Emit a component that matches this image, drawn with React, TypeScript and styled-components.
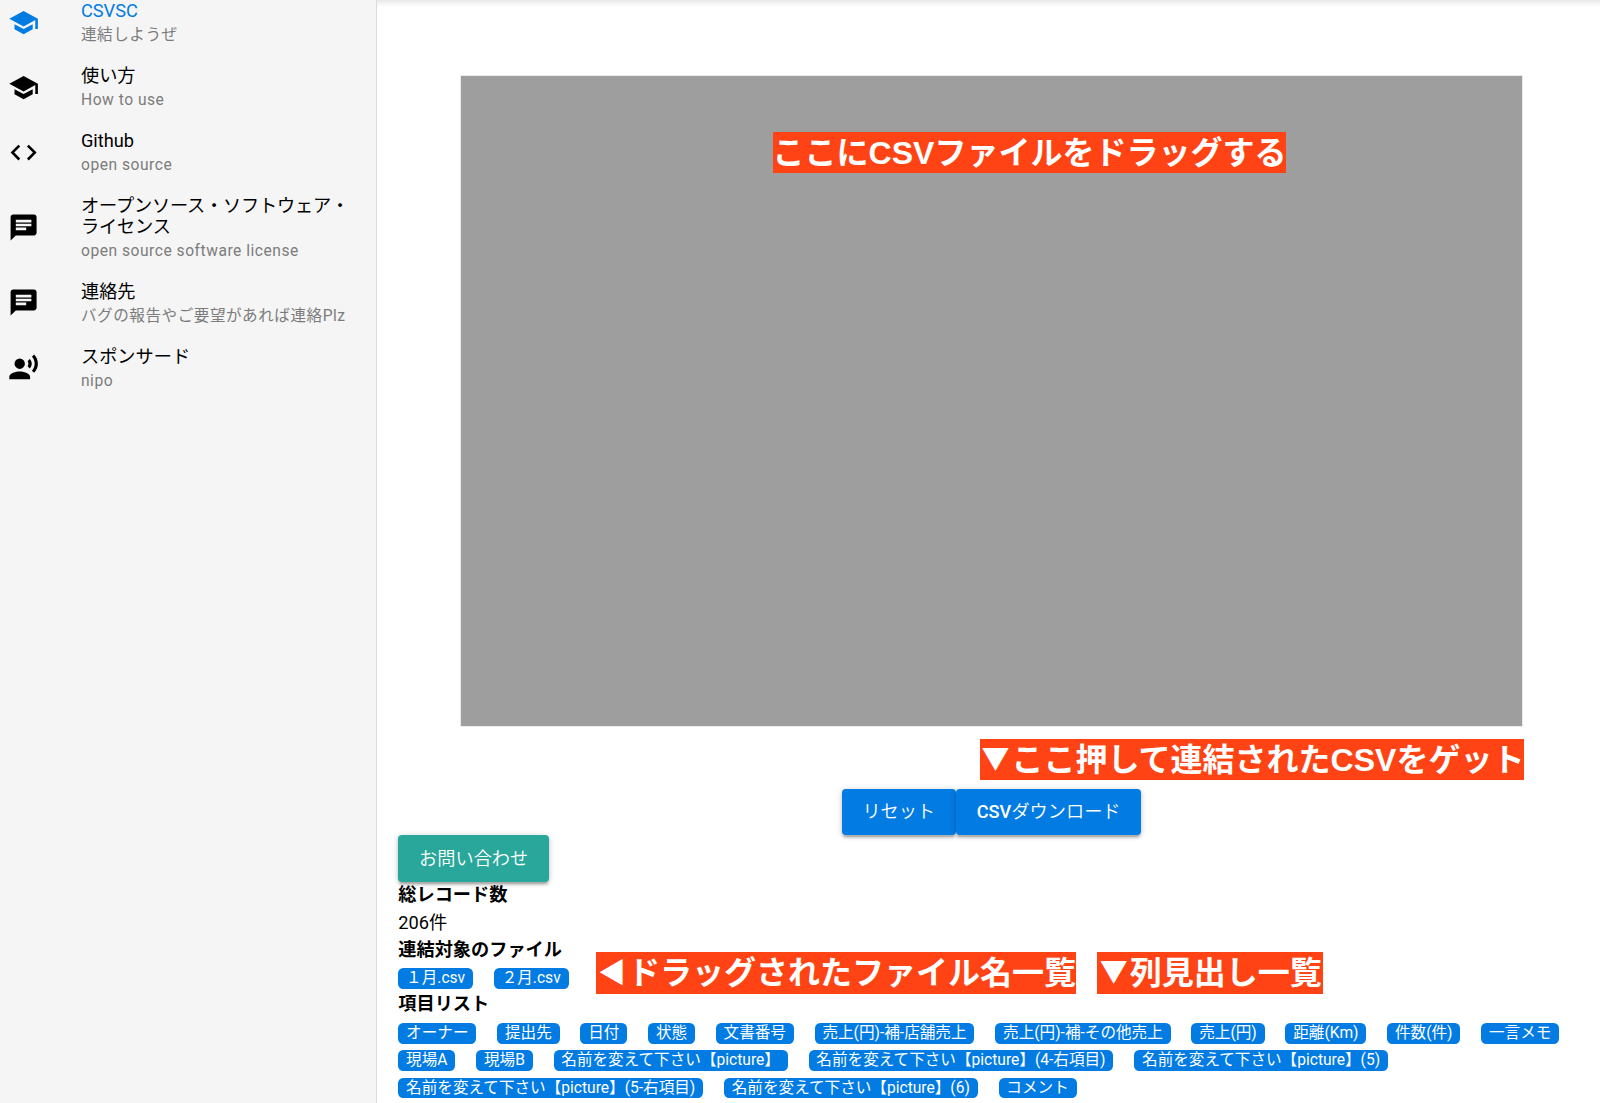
import React from "react";
import styled, { createGlobalStyle, css } from "styled-components";

const GlobalStyle = createGlobalStyle`
  *, *::before, *::after { box-sizing: border-box; }
  html, body { margin: 0; padding: 0; overflow: hidden; background: #fff; }
  body {
    font-family: Roboto, "Noto Sans CJK JP", sans-serif;
    font-size: 18.2px;
    line-height: 27.3px;
    color: #000;
    text-spacing-trim: space-all;
    -webkit-font-smoothing: antialiased;
  }
`;

const Layout = styled.div`
  position: relative;
  display: flex;
  width: 1600px;
  height: 1103px;
  overflow: hidden;
`;

const Drawer = styled.nav`
  flex: none;
  width: 377px;
  background: #f5f5f5;
  border-right: 1px solid #dcdcdc;
`;

const DrawerList = styled.div`
  display: flex;
  flex-direction: column;
  margin-top: -10.1px;
`;

const DrawerItem = styled.a<{ $active?: boolean }>`
  display: flex;
  align-items: center;
  padding: 10.4px 20.8px 10.3px 8.2px;
  color: ${(p) => (p.$active ? "#027be3" : "#000")};
`;

const IconSlot = styled.div`
  flex: none;
  display: flex;
  width: 72.8px;
`;

const Icon = styled.svg`
  width: 31.2px;
  height: 31.2px;
  fill: currentColor;
`;

const ItemText = styled.div`
  flex: 1;
  min-width: 0;
`;

const ItemLabel = styled.div<{ $tight?: boolean }>`
  line-height: 21px;
  white-space: pre-line;
  letter-spacing: ${(p) => (p.$tight ? "-0.18px" : "normal")};
`;

const ItemCaption = styled.div`
  margin-top: 5.2px;
  font-size: 15.6px;
  line-height: 18px;
  letter-spacing: 0.52px;
  color: #7c7c7c;
  white-space: nowrap;
`;

const Page = styled.main`
  position: relative;
  flex: 1;
  display: flex;
  flex-direction: column;
  align-items: flex-start;
  padding: 75px 16px 0 21.3px;
  box-shadow: inset 0 7px 6px -5px rgba(0, 0, 0, 0.13);
`;

const DropZone = styled.div`
  align-self: center;
  width: 1063px;
  height: 652px;
  border: 1px solid #e9ecec;
  background: #9e9e9e;
`;

const ButtonRow = styled.div`
  align-self: center;
  display: flex;
  margin: 61.5px 0 0 0.6px;
`;

const Button = styled.button<{ $tone: "primary" | "secondary" }>`
  height: 46.8px;
  padding: 0 20.8px;
  border: 0;
  border-radius: 3.9px;
  background: ${(p) => (p.$tone === "primary" ? "#027be3" : "#2aa79b")};
  color: #fff;
  font: 500 18.2px/27.3px Roboto, "Noto Sans CJK JP", sans-serif;
  white-space: nowrap;
  box-shadow: 0 1px 6px rgba(0, 0, 0, 0.2), 0 2.6px 2.6px rgba(0, 0, 0, 0.14),
    0 4px 1.3px -2.6px rgba(0, 0, 0, 0.12);
`;

const Kana = styled.span`
  font-weight: 350;
`;

const Line = styled.div<{ $strong?: boolean }>`
  height: 27.3px;
  line-height: ${(p) => (p.$strong ? "26.6px" : "27.3px")};
  font-weight: ${(p) => (p.$strong ? 700 : 400)};
`;

const BadgeList = styled.div`
  display: flex;
  flex-wrap: wrap;
  column-gap: 20.88px;
`;

const BadgeCell = styled.div`
  display: flex;
  height: 27.3px;
  padding-top: 4.5px;
`;

const Badge = styled.span`
  height: 20.8px;
  padding: 0 7.8px;
  border-radius: 5.2px;
  background: #027be3;
  color: #fff;
  font-size: 15.6px;
  line-height: 20.2px;
  white-space: nowrap;
`;

const Note = styled.div<{ $x: number; $y: number; $w: number }>`
  position: absolute;
  ${(p) => css`
    left: ${p.$x}px;
    top: ${p.$y}px;
    width: ${p.$w}px;
  `}
  display: flex;
  justify-content: center;
  height: 41.6px;
  background: #ff4314;
  color: #fff;
  font: 700 32px/42px "Liberation Sans", "Noto Sans CJK JP", sans-serif;
  white-space: nowrap;
`;

const Marker = styled.span<{ $line: number }>`
  flex: none;
  width: 32px;
  text-align: center;
  font-family: "Noto Sans CJK JP", sans-serif;
  font-size: 28px;
  line-height: ${(p) => p.$line}px;
`;

const ICONS = {
  school: "M5 13.18v4L12 21l7-3.82v-4L12 17l-7-3.82zM12 3L1 9l11 6 9-4.91V17h2V9L12 3z",
  code: "M9.4 16.6L4.8 12l4.6-4.6L8 6l-6 6 6 6 1.4-1.4zm5.2 0l4.6-4.6-4.6-4.6L16 6l6 6-6 6-1.4-1.4z",
  chat: "M20 2H4c-1.1 0-1.99.9-1.99 2L2 22l4-4h14c1.1 0 2-.9 2-2V4c0-1.1-.9-2-2-2zM6 9h12v2H6V9zm8 5H6v-2h8v2zm4-6H6V6h12v2z",
  voice:
    "M9 5a4 4 0 1 0 0 8 4 4 0 1 0 0-8zM9 15c-2.67 0-8 1.34-8 4v2h16v-2c0-2.66-5.33-4-8-4zm7.76-9.64l-1.68 1.69c.84 1.18.84 2.71 0 3.89l1.68 1.69c2.02-2.02 2.02-5.07 0-7.27zM20.07 2l-1.63 1.63c2.77 3.02 2.77 7.56 0 10.74L20.07 16c3.9-3.89 3.91-9.95 0-14z",
};

const MENU: {
  icon: keyof typeof ICONS;
  label: string;
  caption: string;
  active?: boolean;
  tight?: boolean;
}[] = [
  { icon: "school", label: "CSVSC", caption: "連結しようぜ", active: true },
  { icon: "school", label: "使い方", caption: "How to use" },
  { icon: "code", label: "Github", caption: "open source" },
  {
    icon: "chat",
    label: "オープンソース・ソフトウェア・\nライセンス",
    caption: "open source software license",
    tight: true,
  },
  { icon: "chat", label: "連絡先", caption: "バグの報告やご要望があれば連絡Plz" },
  { icon: "voice", label: "スポンサード", caption: "nipo" },
];

const FILES = ["１月.csv", "２月.csv"];

const COLUMNS = [
  "オーナー", "提出先", "日付", "状態", "文書番号", "売上(円)-補-店舗売上",
  "売上(円)-補-その他売上", "売上(円)", "距離(Km)", "件数(件)", "一言メモ",
  "現場A", "現場B", "名前を変えて下さい【picture】", "名前を変えて下さい【picture】(4-右項目)",
  "名前を変えて下さい【picture】(5)", "名前を変えて下さい【picture】(5-右項目)",
  "名前を変えて下さい【picture】(6)", "コメント",
];

function Badges({ items }: { items: string[] }) {
  return (
    <BadgeList>
      {items.map((t) => (
        <BadgeCell key={t}>
          <Badge>{t}</Badge>
        </BadgeCell>
      ))}
    </BadgeList>
  );
}

export default function App() {
  return (
    <>
      <GlobalStyle />
      <Layout>
        <Drawer>
          <DrawerList>
            {MENU.map((m) => (
              <DrawerItem key={m.label} $active={m.active}>
                <IconSlot>
                  <Icon viewBox="0 0 24 24">
                    <path d={ICONS[m.icon]} />
                  </Icon>
                </IconSlot>
                <ItemText>
                  <ItemLabel $tight={m.tight}>{m.label}</ItemLabel>
                  <ItemCaption>{m.caption}</ItemCaption>
                </ItemText>
              </DrawerItem>
            ))}
          </DrawerList>
        </Drawer>
        <Page>
          <DropZone />
          <ButtonRow>
            <Button $tone="primary"><Kana>リセット</Kana></Button>
            <Button $tone="primary">CSV<Kana>ダウンロード</Kana></Button>
          </ButtonRow>
          <Button $tone="secondary"><Kana>お問い合わせ</Kana></Button>
          <Line $strong>総レコード数</Line>
          <Line>206件</Line>
          <Line $strong>連結対象のファイル</Line>
          <Badges items={FILES} />
          <Line $strong>項目リスト</Line>
          <Badges items={COLUMNS} />
        </Page>
        <Note $x={773} $y={131.7} $w={513}>ここにCSVファイルをドラッグする</Note>
        <Note $x={980} $y={738.6} $w={544}><Marker $line={36}>▼</Marker>ここ押して連結されたCSVをゲット</Note>
        <Note $x={596} $y={952} $w={480}><Marker $line={38}>◀</Marker>ドラッグされたファイル名一覧</Note>
        <Note $x={1097} $y={952} $w={225.5}><Marker $line={36}>▼</Marker>列見出し一覧</Note>
      </Layout>
    </>
  );
}
